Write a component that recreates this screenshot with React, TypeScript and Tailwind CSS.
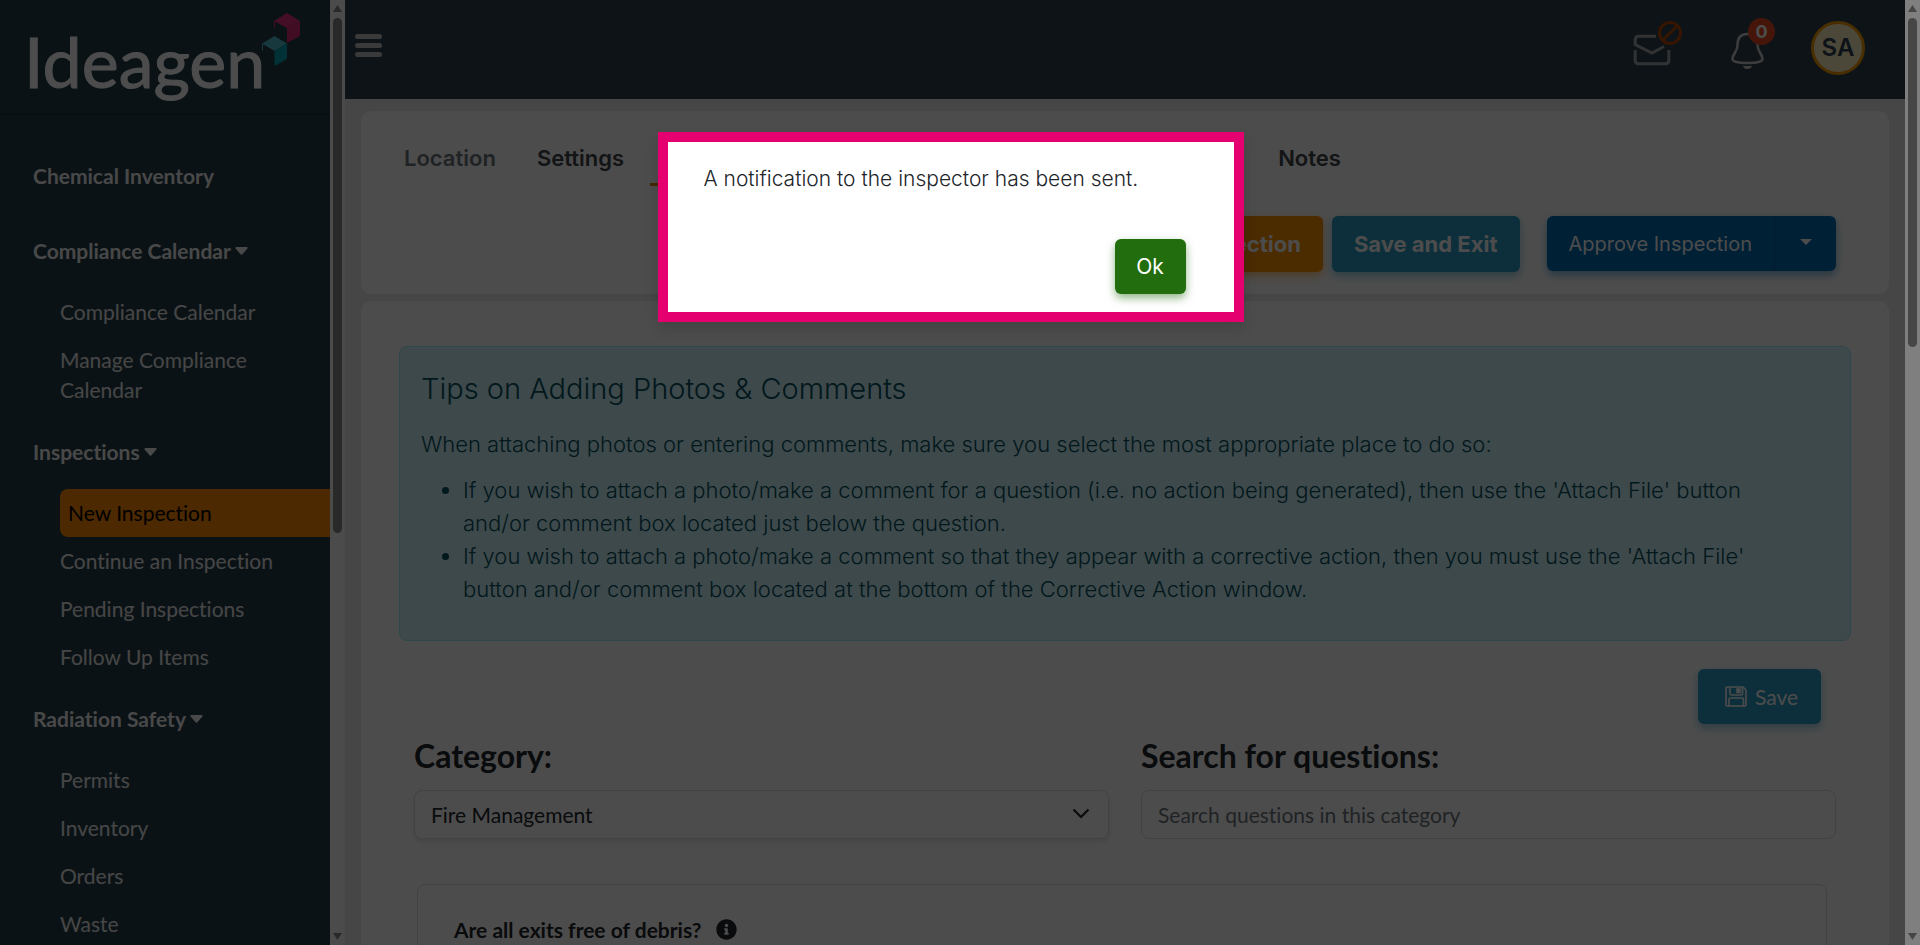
import { useState } from "react";
import { FaInfoCircle } from "react-icons/fa";

interface NavGroup {
  title: string;
  items: string[];
}

const NAV_GROUPS: NavGroup[] = [
  { title: "Chemical Inventory", items: [] },
  {
    title: "Compliance Calendar",
    items: ["Compliance Calendar", "Manage Compliance Calendar"],
  },
  {
    title: "Inspections",
    items: [
      "New Inspection",
      "Continue an Inspection",
      "Pending Inspections",
      "Follow Up Items",
    ],
  },
  {
    title: "Radiation Safety",
    items: ["Permits", "Inventory", "Orders", "Waste"],
  },
];

const TIPS = [
  "If you wish to attach a photo/make a comment for a question (i.e. no action being generated), then use the 'Attach File' button and/or comment box located just below the question.",
  "If you wish to attach a photo/make a comment so that they appear with a corrective action, then you must use the 'Attach File' button and/or comment box located at the bottom of the Corrective Action window.",
];

function Logo() {
  return (
    <svg width="300" height="110" viewBox="0 0 300 110" role="img" aria-label="Ideagen">
      <text
        x="24"
        y="88"
        fill="#fff"
        stroke="#fff"
        strokeWidth="1"
        fontSize="70"
        fontFamily="Lato, sans-serif"
      >
        Ideagen
      </text>
      <path d="M274 21 287 13 300 21 287 28Z" fill="#e5347f" />
      <path d="M287 28 300 21V36L287 43Z" fill="#d92d76" />
      <path d="M274 21V28L275 27V21Z" fill="#e5347f" />
      <path d="M262 43.500 274.500 36 287 43.500 274.500 51Z" fill="#4fbccb" />
      <path d="M274.500 51 287 43.500V59L274.500 66Z" fill="#00a5b5" />
      <path d="M262 43.500V51L263 50V44Z" fill="#4fbccb" />
    </svg>
  );
}

function Caret() {
  return (
    <svg width="13" height="8" viewBox="0 0 13 8" fill="currentColor" aria-hidden="true">
      <path d="M1 0h11q1 .6.400 1.400L7.200 7.400q-.7.7-1.400 0L.6 1.400Q0 .6 1 0Z" />
    </svg>
  );
}

function Scrollbar({ track, thumb, size }: { track: string; thumb: string; size: string }) {
  return (
    <div
      aria-hidden="true"
      className={`flex w-[15px] shrink-0 flex-col items-center justify-between py-1 ${track}`}
    >
      <div className="flex min-h-0 flex-1 flex-col items-center gap-[5px]">
        <svg width="9" height="9" viewBox="0 0 9 9" className={`shrink-0 ${thumb}`}>
          <path d="M4.500 1 9 8H0Z" fill="currentColor" />
        </svg>
        <div className={`w-[9px] rounded-full bg-current ${size} ${thumb}`} />
      </div>
      <svg width="9" height="9" viewBox="0 0 9 9" className={`shrink-0 ${thumb}`}>
        <path d="M4.500 8 9 1H0Z" fill="currentColor" />
      </svg>
    </div>
  );
}

function Sidebar() {
  return (
    <aside className="w-[330px] shrink-0 overflow-hidden bg-[#253d47] text-[21px] leading-[30px]">
      <div className="h-[115px] border-b border-black/20">
        <Logo />
      </div>
      <nav className="pt-[23px] text-white">
        {NAV_GROUPS.map((group) => (
          <div key={group.title}>
            <button
              type="button"
              className="flex h-[75px] items-center gap-1 pl-[33px] font-bold text-white/95"
            >
              {group.title}
              {group.items.length > 0 && <Caret />}
            </button>
            <ul className="pl-[60px]">
              {group.items.map((item) => (
                <li key={item}>
                  <a
                    href="#"
                    className={
                      item === "New Inspection"
                        ? "block rounded-l-lg bg-[#ff8a00] py-[9px] pl-2 text-black"
                        : "block py-[9px] pr-10 text-white/90"
                    }
                  >
                    {item}
                  </a>
                </li>
              ))}
            </ul>
          </div>
        ))}
      </nav>
    </aside>
  );
}

function TopBar() {
  return (
    <header className="flex h-[99px] items-start justify-between bg-[#2d424e] pl-[10px] pr-10">
      <button type="button" aria-label="Toggle menu" className="mt-[34px] flex flex-col gap-1">
        <span className="h-[5px] w-[27px] rounded-sm bg-[#c4c4c4]" />
        <span className="h-[5px] w-[27px] rounded-sm bg-[#c4c4c4]" />
        <span className="h-[5px] w-[27px] rounded-sm bg-[#c4c4c4]" />
      </button>
      <div className="flex">
        <button type="button" aria-label="Messages">
          <svg width="60" height="80" viewBox="1630 0 60 80" fill="none">
            <g stroke="#a3a9ae" strokeWidth="3">
              <path d="M1656 36.200H1639Q1635.200 36.200 1635.200 40V44.500L1652 53L1664 46.500" />
              <path d="M1635.200 50V60.500Q1635.200 63.800 1638.500 63.800H1665.500Q1668.800 63.800 1668.800 60.500V50" />
            </g>
            <g stroke="#b54a00" strokeWidth="3">
              <circle cx="1670" cy="33" r="10.500" />
              <path d="M1663 40 1677 26" />
            </g>
          </svg>
        </button>
        <button type="button" aria-label="Notifications" className="ml-9">
          <svg width="60" height="80" viewBox="1726 0 60 80" fill="none">
            <path
              d="M1747.500 34C1741 34 1737.500 38 1737.500 45C1737.500 52 1732.500 54 1732.500 59C1732.500 61.500 1738 63 1747.500 63S1762.500 61.500 1762.500 59C1762.500 54 1757.500 52 1757.500 45C1757.500 38 1754 34 1747.500 34Z"
              stroke="#cfcccc"
              strokeWidth="2.500"
            />
            <path d="M1743 66H1752Q1751 69 1747.500 69T1743 66Z" fill="#cfcccc" />
            <circle cx="1761.500" cy="31.500" r="13.500" fill="#e8481e" />
            <text
              x="1761.500"
              y="38"
              fill="#fff"
              fontSize="18"
              fontWeight="700"
              textAnchor="middle"
              fontFamily="Inter, sans-serif"
            >
              0
            </text>
          </svg>
        </button>
        <button
          type="button"
          className="ml-[25px] mt-[21px] size-[54px] rounded-full border-[3px] border-[#f39a00] bg-[#fff0c0] font-[Inter,sans-serif] text-2xl font-semibold text-[#2e4250]"
        >
          SA
        </button>
      </div>
    </header>
  );
}

function InspectionToolbar() {
  return (
    <section className="rounded-[10px] bg-white pb-[22px] pl-6 pr-[53px] pt-[25px] font-[Inter,sans-serif] text-[22px]">
      <div className="flex h-[51px] items-start font-semibold text-[#3d4448]">
        <button type="button" className="h-[45px] px-[19px] text-[#6b757c]">
          Location
        </button>
        <button type="button" className="h-[45px] px-[22px]">
          Settings
        </button>
        <div className="ml-1 h-[50px] w-[300px] border-b-[3px] border-[#d98700]" />
        <button type="button" className="ml-[308px] h-[45px] px-5">
          Notes
        </button>
      </div>
      <div className="mt-[29px] flex justify-end">
        <button
          type="button"
          className="h-14 rounded-md bg-[#fb9100] px-[22px] font-bold text-white shadow-[0_4px_8px_#fb910080]"
        >
          Inspection
        </button>
        <button
          type="button"
          className="ml-[9px] h-14 rounded-md bg-[#2b9ec6] px-[22px] font-bold text-white shadow-[0_4px_8px_#2b9ec680]"
        >
          Save and Exit
        </button>
        <div className="ml-[27px] flex h-[55px] rounded-md bg-[#006cb5] text-xl text-white shadow-[0_4px_8px_#006cb580]">
          <button type="button" className="border-r border-black/20 px-[22px]">
            Approve Inspection
          </button>
          <button type="button" aria-label="More actions" className="flex w-[61px] items-center justify-center pb-1">
            <svg width="12" height="6" viewBox="0 0 12 6" fill="currentColor">
              <path d="M0 0H12L6 6Z" />
            </svg>
          </button>
        </div>
      </div>
    </section>
  );
}

function TipsPanel() {
  return (
    <div className="h-[295px] rounded-lg border border-[#9eeaf9] bg-[#cff4fc] px-[21px] pt-[22px] font-[Inter,sans-serif] font-light text-[#055160]">
      <h2 className="text-[29px] leading-10">Tips on Adding Photos &amp; Comments</h2>
      <p className="mt-[19px] text-[22px] leading-8">
        When attaching photos or entering comments, make sure you select the most appropriate place to do so:
      </p>
      <ul className="mt-[14px] list-disc pl-[42px] pr-6 text-[22px] leading-[33px]">
        {TIPS.map((tip) => (
          <li key={tip}>{tip}</li>
        ))}
      </ul>
    </div>
  );
}

function QuestionsSection() {
  return (
    <section className="mt-[7px] rounded-t-[10px] bg-white px-[38px] pt-[45px]">
      <TipsPanel />
      <div className="mt-7 flex justify-end pr-[30px]">
        <button
          type="button"
          className="flex h-[55px] w-[123px] items-center justify-center gap-2 rounded-md bg-[#2b9ec6] pl-1 text-[21px] text-white shadow-[0_4px_8px_#2b9ec680]"
        >
          <svg width="22" height="21" viewBox="0 0 22 21" fill="none" stroke="currentColor" strokeWidth="1.600">
            <path d="M2 1H18L21 4V19Q21 20 20 20H2Q1 20 1 19V2Q1 1 2 1Z" />
            <path d="M5 1V7.500Q5 9 6.500 9H16Q17.500 9 17.500 7.500V1M4 20V13.500Q4 12 5.500 12H17Q18.500 12 18.500 13.500V20" />
            <path d="M12 3H15V6.500H12Z" fill="currentColor" />
          </svg>
          Save
        </button>
      </div>
      <div className="mt-3 grid grid-cols-2 gap-8 px-[15px]">
        <div>
          <label htmlFor="category" className="block text-[32px] font-bold leading-10">
            Category:
          </label>
          <div className="relative mt-[14px]">
            <select
              id="category"
              className="block h-[49px] w-full appearance-none rounded-lg border border-[#dcdcdc] bg-white px-4 text-[21px] text-[#212529] shadow-[0_3px_5px_#0000001a]"
            >
              <option>Fire Management</option>
            </select>
            <svg
              width="18"
              height="11"
              viewBox="0 0 18 11"
              fill="none"
              stroke="#212529"
              strokeWidth="2.200"
              className="pointer-events-none absolute right-[19px] top-[18px]"
            >
              <path d="M1.500 1.500 9 9 16.500 1.500" />
            </svg>
          </div>
        </div>
        <div>
          <label htmlFor="search" className="block text-[32px] font-bold leading-10">
            Search for questions:
          </label>
          <input
            id="search"
            type="text"
            placeholder="Search questions in this category"
            className="mt-[14px] block h-[49px] w-full rounded-lg border border-[#dcdcdc] px-4 text-[21px] placeholder:text-[#6c757d]"
          />
        </div>
      </div>
      <div className="ml-[18px] mr-6 mt-[45px] flex h-40 items-start gap-[15px] rounded-t-lg border border-[#dcdcdc] pl-9 pt-[30px] text-[21px] font-bold leading-[30px]">
        Are all exits free of debris?
        <FaInfoCircle className="mt-1 size-[21px]" />
      </div>
    </section>
  );
}

function NotificationDialog({ onClose }: { onClose: () => void }) {
  return (
    <div className="absolute inset-0 flex items-start justify-center bg-black/70 pr-1">
      <div
        role="dialog"
        aria-modal="true"
        className="mt-[132px] flex h-[190px] w-[586px] flex-col border-[10px] border-[#e5006f] bg-white px-9 pt-5 font-[Inter,sans-serif] text-[21px] text-[#212529] shadow-[0_6px_12px_#00000020]"
      >
        <p className="font-light leading-[34px]">A notification to the inspector has been sent.</p>
        <button
          type="button"
          onClick={onClose}
          className="mr-3 mt-[43px] h-[55px] w-[71px] self-end rounded-md bg-[#226e0e] text-white shadow-[0_4px_8px_#226e0e80]"
        >
          Ok
        </button>
      </div>
    </div>
  );
}

export default function App() {
  const [open, setOpen] = useState(true);

  return (
    <div className="flex h-screen overflow-hidden font-[Lato,sans-serif] text-[#212529] [font-variant-ligatures:none]">
      <div className="relative flex min-w-0 flex-1 overflow-hidden">
        <Sidebar />
        <Scrollbar track="bg-[#fcfcfc]" thumb="text-[#8b8b8b]" size="h-[515px]" />
        <main className="min-w-0 flex-1 overflow-hidden bg-[#e9e9e9]">
          <TopBar />
          <div className="px-4 pt-3">
            <InspectionToolbar />
            <QuestionsSection />
          </div>
        </main>
        {open && <NotificationDialog onClose={() => setOpen(false)} />}
      </div>
      <Scrollbar track="bg-[#7f7f7f]" thumb="text-[#464646]" size="h-[329px]" />
    </div>
  );
}
